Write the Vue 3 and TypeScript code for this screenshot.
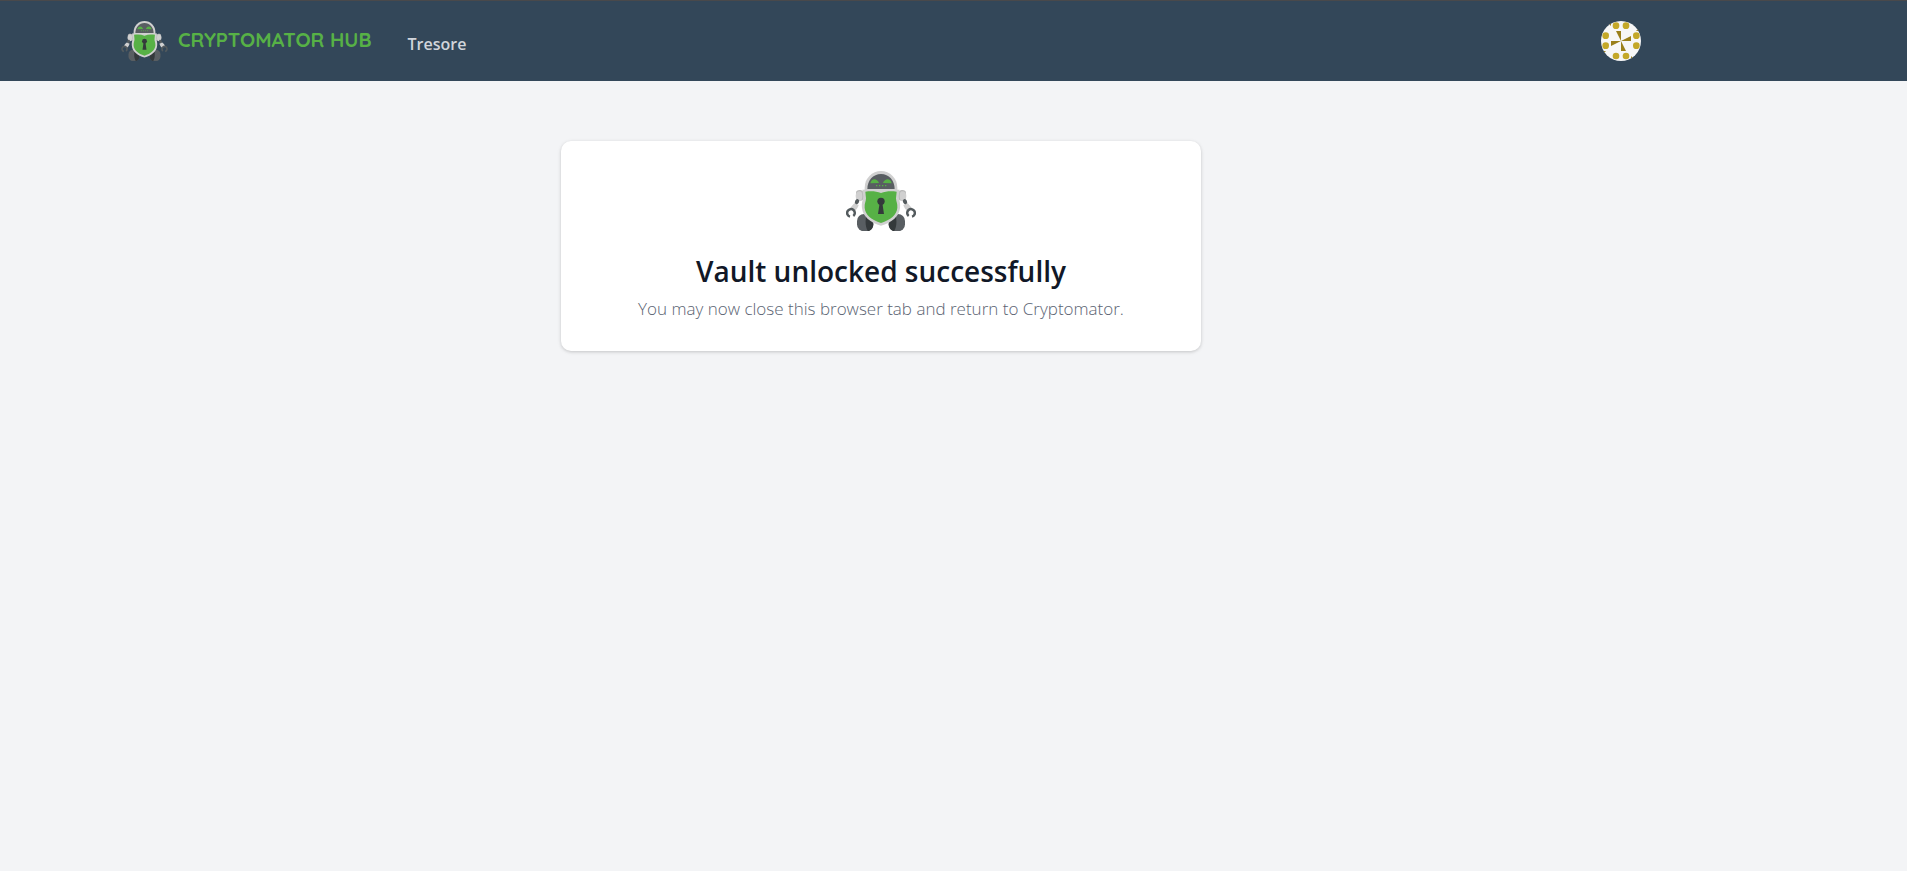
<script setup lang="ts">
interface NavItem {
  label: string
  href: string
}

const navigation: NavItem[] = [{ label: 'Tresore', href: '#vaults' }]
const avatarDots: [number, number][] = [
  [45, 14], [75, 14], [14, 44], [14, 74], [106, 44], [106, 74], [45, 105], [75, 105],
]
const quarterTurns: number[] = [0, 90, 180, 270]
</script>

<template>
  <svg class="symbols" aria-hidden="true">
    <symbol id="robot-half" viewBox="0 0 210 180" overflow="visible">
      <path d="M30 66c0-8 8-10 16-8l8 4v24l-12 4c-8 0-12-5-12-13z" fill="#b8b8b8" />
      <path d="M29 75c0-8 5-14 12-14 6 0 8 6 8 14s-3 16-9 16-11-6-11-16z" fill="#d0d0d0" />
      <path d="M27 96l11 6c-2 7-6 13-12 18l-13-8c3-6 8-12 14-16z" fill="#d0d0d0" />
      <ellipse cx="33" cy="92" rx="6" ry="8" transform="rotate(25 33 92)" fill="#545b5e" />
      <path d="M12 137A11.500 11.500 0 1 1 22 135" fill="none" stroke="#545b5e" stroke-width="7.500" />
      <rect x="33" y="129" width="49" height="52" rx="21" fill="#595e62" />
      <path d="M61 135c10 4 21 17 21 26 0 10-8 18-16 20-8-12-9-32-5-46z" fill="#34393b" />
    </symbol>
    <symbol id="robot" viewBox="0 0 210 180">
      <use href="#robot-half" width="210" height="180" />
      <use href="#robot-half" width="210" height="180" transform="translate(210 0) scale(-1 1)" />
      <path d="M56 62V50a49 50 0 0 1 98 0v12z" fill="#d0d0d0" />
      <path d="M64 54c0-25 17-45 41-45s41 20 41 45z" fill="#595e62" />
      <path d="M73 37c3-16 20-16 26-1zM137 37c-3-16-20-16-26-1z" fill="#57b146" />
      <path d="M90 44h4M99 44h4M108 44h4M117 44h4" stroke="#57b146" stroke-width="4" />
      <path d="M49 56c20 0 37-3 56 2 19-5 36-2 56-2l-3 20c1 12 6 19 4 35-2 25-26 45-57 53-31-8-55-28-57-53-2-16 3-23 4-35z" fill="#d0d0d0" />
      <path d="M58 62c16-2 32-2 47 4 15-6 31-6 47-4l-2 20c0 9 5 16 4 28-2 22-20 36-49 46-29-10-47-24-49-46-1-12 4-19 4-28z" fill="#57b146" />
      <circle cx="105" cy="91" r="11" fill="#34393b" />
      <path d="M101 96h8l5 33H96z" fill="#34393b" />
    </symbol>
  </svg>

  <div class="page">
    <header class="topbar">
      <nav class="container" aria-label="Main">
        <a class="brand" href="#home">
          <svg class="brand-logo" viewBox="0 0 210 180" aria-hidden="true"><use href="#robot" width="210" height="180" /></svg>
          <span class="brand-name">CRYPTOMATOR HUB</span>
        </a>
        <a v-for="item in navigation" :key="item.href" class="nav-link" :href="item.href">{{ item.label }}</a>
        <button class="avatar" type="button" aria-label="User menu">
          <svg viewBox="0 0 120 120" aria-hidden="true">
            <rect width="120" height="120" fill="#f7f7f7" />
            <g v-for="turn in quarterTurns" :key="turn" :transform="`rotate(${turn} 60 60)`" fill="#9a7f1a">
              <path d="M45 30h15v30z" />
              <path d="M30 0v15L15 0z" />
            </g>
            <circle v-for="([x, y], i) in avatarDots" :key="i" :cx="x" :cy="y" r="10" fill="#c4a828" />
          </svg>
        </button>
      </nav>
    </header>

    <main class="content">
      <section class="card">
        <svg class="card-logo" viewBox="0 0 210 180" role="img" aria-label="Cryptomator"><use href="#robot" width="210" height="180" /></svg>
        <h1>Vault unlocked successfully</h1>
        <p>You may now close this browser tab and return to Cryptomator.</p>
      </section>
    </main>
  </div>
</template>

<style>
body {
  background: #f3f4f6;
}
</style>

<style scoped>
.symbols {
  position: absolute;
  width: 0;
  height: 0;
}

.page {
  font-family: "Segoe UI", "Open Sans", "Noto Sans", sans-serif;
}

.topbar,
.content {
  box-sizing: border-box;
  padding: 0 185px 0 40px;
}

.content {
  padding-top: 60px;
  padding-bottom: 60px;
}

.topbar {
  border-top: 1px solid #49494b;
  background: #334759;
}

.container {
  display: flex;
  align-items: center;
  max-width: 1520px;
  height: 80px;
  margin: 0 auto;
}

.brand {
  display: flex;
  align-items: center;
  gap: 10px;
  text-decoration: none;
}

.brand-logo {
  width: 47px;
  height: 40px;
}

.brand-name {
  padding-bottom: 2px;
  color: #57b146;
  font-family: Quicksand, Lato, sans-serif;
  font-size: 20px;
  font-weight: 700;
  line-height: 28px;
}

.nav-link {
  margin-left: 36px;
  padding-top: 6px;
  color: #d1d5db;
  font-size: 16px;
  font-weight: 600;
  line-height: 24px;
  text-decoration: none;
}

.avatar {
  width: 40px;
  height: 40px;
  margin-left: auto;
  padding: 0;
  overflow: hidden;
  border: 0;
  border-radius: 50%;
  background: none;
  cursor: pointer;
}

.avatar svg {
  display: block;
  width: 100%;
  height: 100%;
}

.card {
  box-sizing: border-box;
  max-width: 640px;
  margin: 0 auto;
  padding: 30px;
  border-radius: 10px;
  background: #fff;
  box-shadow: 0 1px 4px rgb(0 0 0 / 10%), 0 1px 3px rgb(0 0 0 / 10%);
  text-align: center;
}

.card-logo {
  display: block;
  width: 70px;
  height: 60px;
  margin: 0 auto;
}

h1 {
  margin: 20px 0 0;
  color: #111827;
  font-size: 28px;
  font-weight: 600;
  line-height: 40px;
}

p {
  margin: 6px 0 0;
  color: #5a6372;
  font-size: 17px;
  font-weight: 350;
  line-height: 24px;
}
</style>
